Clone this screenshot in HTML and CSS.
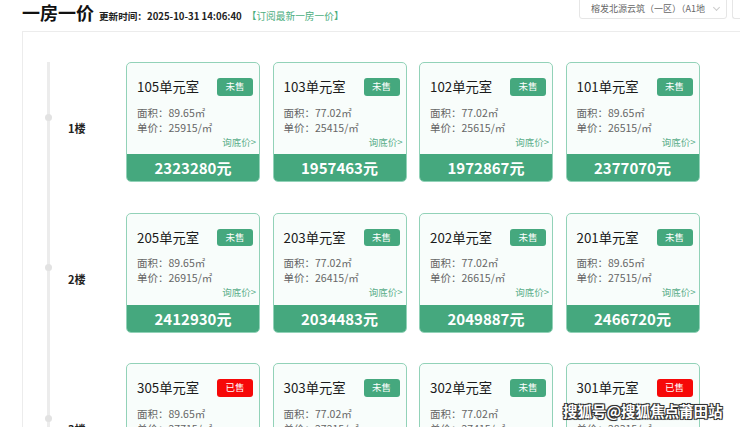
FILE: index.html
```html
<html>
  <head>
    <title>一房一价</title>
    <meta charset="utf-8">
    <link rel="stylesheet" href="styles.css">
  </head>
  <body>
    <div class="header">
      <span class="title">一房一价</span>
      <span class="update">更新时间：2025-10-31 14:06:40</span>
      <span class="subscribe">【订阅最新一房一价】</span>
      <div class="select">榕发北源云筑（一区）（A1地<span class="arrow"></span></div>
      <div class="select2"></div>
    </div>
    <div class="panel">
      <div class="floors">

        <div class="floor">
          <span class="dot"></span>
          <span class="floor-name">1楼</span>
          <div class="cards">
            <div class="card">
              <div class="card-head"><span class="room">105单元室</span><span class="badge">未售</span></div>
              <div class="info">面积：89.65㎡</div>
              <div class="info">单价：25915/㎡</div>
              <div class="ask">询底价&gt;</div>
              <div class="total">2323280元</div>
            </div>
            <div class="card">
              <div class="card-head"><span class="room">103单元室</span><span class="badge">未售</span></div>
              <div class="info">面积：77.02㎡</div>
              <div class="info">单价：25415/㎡</div>
              <div class="ask">询底价&gt;</div>
              <div class="total">1957463元</div>
            </div>
            <div class="card">
              <div class="card-head"><span class="room">102单元室</span><span class="badge">未售</span></div>
              <div class="info">面积：77.02㎡</div>
              <div class="info">单价：25615/㎡</div>
              <div class="ask">询底价&gt;</div>
              <div class="total">1972867元</div>
            </div>
            <div class="card">
              <div class="card-head"><span class="room">101单元室</span><span class="badge">未售</span></div>
              <div class="info">面积：89.65㎡</div>
              <div class="info">单价：26515/㎡</div>
              <div class="ask">询底价&gt;</div>
              <div class="total">2377070元</div>
            </div>
          </div>
        </div>

        <div class="floor">
          <span class="dot"></span>
          <span class="floor-name">2楼</span>
          <div class="cards">
            <div class="card">
              <div class="card-head"><span class="room">205单元室</span><span class="badge">未售</span></div>
              <div class="info">面积：89.65㎡</div>
              <div class="info">单价：26915/㎡</div>
              <div class="ask">询底价&gt;</div>
              <div class="total">2412930元</div>
            </div>
            <div class="card">
              <div class="card-head"><span class="room">203单元室</span><span class="badge">未售</span></div>
              <div class="info">面积：77.02㎡</div>
              <div class="info">单价：26415/㎡</div>
              <div class="ask">询底价&gt;</div>
              <div class="total">2034483元</div>
            </div>
            <div class="card">
              <div class="card-head"><span class="room">202单元室</span><span class="badge">未售</span></div>
              <div class="info">面积：77.02㎡</div>
              <div class="info">单价：26615/㎡</div>
              <div class="ask">询底价&gt;</div>
              <div class="total">2049887元</div>
            </div>
            <div class="card">
              <div class="card-head"><span class="room">201单元室</span><span class="badge">未售</span></div>
              <div class="info">面积：89.65㎡</div>
              <div class="info">单价：27515/㎡</div>
              <div class="ask">询底价&gt;</div>
              <div class="total">2466720元</div>
            </div>
          </div>
        </div>

        <div class="floor">
          <span class="dot"></span>
          <span class="floor-name">3楼</span>
          <div class="cards">
            <div class="card">
              <div class="card-head"><span class="room">305单元室</span><span class="badge sold">已售</span></div>
              <div class="info">面积：89.65㎡</div>
              <div class="info">单价：27715/㎡</div>
              <div class="ask">询底价&gt;</div>
              <div class="total">2484650元</div>
            </div>
            <div class="card">
              <div class="card-head"><span class="room">303单元室</span><span class="badge">未售</span></div>
              <div class="info">面积：77.02㎡</div>
              <div class="info">单价：27215/㎡</div>
              <div class="ask">询底价&gt;</div>
              <div class="total">2096099元</div>
            </div>
            <div class="card">
              <div class="card-head"><span class="room">302单元室</span><span class="badge">未售</span></div>
              <div class="info">面积：77.02㎡</div>
              <div class="info">单价：27415/㎡</div>
              <div class="ask">询底价&gt;</div>
              <div class="total">2111503元</div>
            </div>
            <div class="card">
              <div class="card-head"><span class="room">301单元室</span><span class="badge sold">已售</span></div>
              <div class="info">面积：89.65㎡</div>
              <div class="info">单价：28315/㎡</div>
              <div class="ask">询底价&gt;</div>
              <div class="total">2538440元</div>
            </div>
          </div>
        </div>

      </div>
    </div>
    <div class="watermark">搜狐号@搜狐焦点莆田站</div>
  </body>
</html>
```

FILE: styles.css
```css
html, body { margin: 0; padding: 0; }
body {
  width: 740px;
  height: 427px;
  overflow: hidden;
  position: relative;
  background: #fff;
  font-family: "Noto Sans CJK SC", "Noto Sans", sans-serif;
  color: #333;
}
.header {
  display: flex;
  align-items: baseline;
  height: 31px;
  padding-left: 22px;
}
.title {
  font-size: 18px;
  font-weight: bold;
  line-height: 25px;
  color: #111;
}
.update {
  font-size: 9.6px;
  font-weight: bold;
  color: #222;
  margin-left: 5px;
}
.subscribe {
  font-size: 9.7px;
  color: #4cae7e;
  margin-left: 5px;
}
.select {
  align-self: flex-start;
  margin-left: auto;
  margin-top: -1px;
  width: 148px;
  height: 20px;
  box-sizing: border-box;
  border: 1px solid #e6e6e6;
  border-radius: 0 0 3px 3px;
  font-size: 9px;
  line-height: 18px;
  color: #666;
  padding-left: 11px;
  white-space: nowrap;
  overflow: hidden;
}
.arrow {
  display: inline-block;
  width: 4px;
  height: 4px;
  border-right: 1px solid #ccc;
  border-bottom: 1px solid #ccc;
  transform: rotate(45deg);
  margin-left: 9px;
  position: relative;
  top: -2px;
}
.select2 {
  align-self: flex-start;
  margin-top: -1px;
  margin-left: 5px;
  width: 8px;
  height: 20px;
  box-sizing: border-box;
  border: 1px solid #e6e6e6;
  border-right: 0;
  border-radius: 0 0 0 3px;
}
.panel {
  margin-left: 22px;
  border-top: 1px solid #ececec;
  border-left: 1px solid #ececec;
  padding-top: 30px;
}
.floors {
  margin-left: 24px;
  border-left: 3px solid #ececec;
}
.floor {
  display: flex;
  align-items: flex-start;
  margin-bottom: 30.5px;
}
.dot {
  width: 7px;
  height: 7px;
  border-radius: 50%;
  background: #e2e2e2;
  margin-left: -5px;
  margin-top: 51.5px;
  flex-shrink: 0;
}
.floor-name {
  width: 58px;
  margin-left: 16px;
  margin-top: 58px;
  font-size: 11px;
  line-height: 16px;
  font-weight: bold;
  color: #222;
  flex-shrink: 0;
}
.cards {
  display: flex;
  gap: 12.5px;
}
.card {
  width: 134px;
  height: 120px;
  box-sizing: border-box;
  border: 1px solid #92d2b8;
  border-radius: 5px;
  background: #f8fdfb;
  display: flex;
  flex-direction: column;
  overflow: hidden;
}
.card-head {
  display: flex;
  align-items: center;
  justify-content: space-between;
  height: 20px;
  padding: 14px 6px 0 10px;
}
.room {
  font-size: 13.3px;
  color: #1a1a1a;
  line-height: 20px;
}
.badge {
  width: 36px;
  height: 17.5px;
  border-radius: 3px;
  background: #45a87e;
  color: #fff;
  font-size: 9.5px;
  line-height: 17.5px;
  text-align: center;
}
.badge.sold { background: #f60808; }
.info {
  font-size: 10.5px;
  line-height: 15px;
  color: #666;
  padding-left: 10px;
}
.card-head + .info { margin-top: 7.5px; }
.ask {
  font-size: 9.5px;
  line-height: 14px;
  color: #5aae8a;
  text-align: right;
  padding-right: 3px;
}
.total {
  margin-top: auto;
  height: 27px;
  background: #45a87e;
  color: #fff;
  font-size: 15px;
  font-weight: bold;
  line-height: 27px;
  text-align: center;
}
.watermark {
  position: absolute;
  left: 563px;
  top: 400px;
  font-size: 14.5px;
  font-weight: bold;
  color: #fff;
  text-shadow: -1px -1px 0 #333, 1px -1px 0 #333, -1px 1px 0 #333, 1px 1px 0 #333, 0 0 2px #000;
  white-space: nowrap;
}
```
